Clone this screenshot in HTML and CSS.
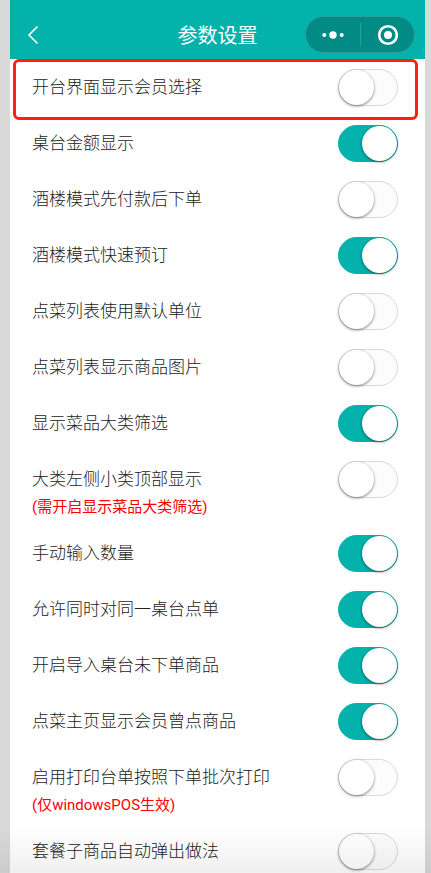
FILE: index.html
```html
<!DOCTYPE html>
<html lang="zh-CN">
<head>
  <meta charset="UTF-8" />
  <meta name="viewport" content="width=device-width, initial-scale=1.0" />
  <title>参数设置</title>
  <link rel="stylesheet" href="styles.css">
</head>
<body>
  <div class="page">
    <header class="navbar">
      <button class="back" type="button" aria-label="返回">
        <svg viewBox="0 0 12 20" width="12" height="20">
          <path d="M10.5 1.5 L2 10 L10.5 18.5" fill="none" stroke="#fff" stroke-width="1.6"/>
        </svg>
      </button>
      <h1>参数设置</h1>
      <div class="capsule">
        <button type="button" aria-label="更多">
          <svg viewBox="0 0 24 20" width="24" height="20" fill="#fff">
            <circle cx="3.3" cy="10" r="2"/>
            <circle cx="12" cy="10" r="3.7"/>
            <circle cx="20.7" cy="10" r="2"/>
          </svg>
        </button>
        <button type="button" aria-label="关闭">
          <svg viewBox="0 0 22 22" width="22" height="22">
            <circle cx="12" cy="11" r="8.8" fill="none" stroke="#fff" stroke-width="2.6"/>
            <circle cx="12" cy="11" r="4" fill="#fff"/>
          </svg>
        </button>
      </div>
    </header>

    <main class="settings">
      <div class="row marked">
        <label for="s1">开台界面显示会员选择</label>
        <input class="switch" type="checkbox" id="s1" />
      </div>
      <div class="row">
        <label for="s2">桌台金额显示</label>
        <input class="switch" type="checkbox" id="s2" checked />
      </div>
      <div class="row">
        <label for="s3">酒楼模式先付款后下单</label>
        <input class="switch" type="checkbox" id="s3" />
      </div>
      <div class="row">
        <label for="s4">酒楼模式快速预订</label>
        <input class="switch" type="checkbox" id="s4" checked />
      </div>
      <div class="row">
        <label for="s5">点菜列表使用默认单位</label>
        <input class="switch" type="checkbox" id="s5" />
      </div>
      <div class="row">
        <label for="s6">点菜列表显示商品图片</label>
        <input class="switch" type="checkbox" id="s6" />
      </div>
      <div class="row">
        <label for="s7">显示菜品大类筛选</label>
        <input class="switch" type="checkbox" id="s7" checked />
      </div>
      <div class="row">
        <label for="s8">大类左侧小类顶部显示 <small>(需开启显示菜品大类筛选)</small></label>
        <input class="switch" type="checkbox" id="s8" />
      </div>
      <div class="row">
        <label for="s9">手动输入数量</label>
        <input class="switch" type="checkbox" id="s9" checked />
      </div>
      <div class="row">
        <label for="s10">允许同时对同一桌台点单</label>
        <input class="switch" type="checkbox" id="s10" checked />
      </div>
      <div class="row">
        <label for="s11">开启导入桌台未下单商品</label>
        <input class="switch" type="checkbox" id="s11" checked />
      </div>
      <div class="row">
        <label for="s12">点菜主页显示会员曾点商品</label>
        <input class="switch" type="checkbox" id="s12" checked />
      </div>
      <div class="row">
        <label for="s13">启用打印台单按照下单批次打印 <small>(仅windowsPOS生效)</small></label>
        <input class="switch" type="checkbox" id="s13" />
      </div>
      <div class="row">
        <label for="s14">套餐子商品自动弹出做法</label>
        <input class="switch" type="checkbox" id="s14" />
      </div>
    </main>
  </div>
</body>
</html>
```

FILE: styles.css
```css
* {
  box-sizing: border-box;
}

body {
  margin: 0;
  height: 100vh;
  overflow: hidden;
  padding: 0 6px 0 10px;
  background: #d9d9d9;
  font-family: Roboto, "Noto Sans CJK SC", sans-serif;
  color: #222;
}

.page {
  min-height: 100vh;
  background: #fff;
}

/* fade along the bottom edge of the screen */
body::after {
  content: "";
  position: fixed;
  left: 0;
  right: 0;
  bottom: 0;
  height: 48px;
  background: linear-gradient(rgba(0, 0, 0, 0), rgba(0, 0, 0, 0.06));
  pointer-events: none;
}

button {
  display: flex;
  align-items: center;
  justify-content: center;
  padding: 0;
  border: 0;
  background: none;
}

.navbar {
  display: grid;
  grid-template-columns: 1fr auto 1fr;
  align-items: center;
  height: 59px;
  padding: 10px 10px 0;
  background: #02b2ab;
}

.back {
  width: 13px;
  height: 36px;
  margin-left: 6px;
}

h1 {
  margin: 0;
  padding-top: 2px;
  font-size: 20px;
  font-weight: 400;
  line-height: 36px;
  color: #fff;
}

.capsule {
  display: flex;
  justify-self: end;
  width: 110px;
  height: 37px;
  padding: 6px 0;
  border: 1px solid #2a9f99;
  border-radius: 19px;
  background: #028a84;
}

.capsule button {
  flex: 1;
}

.capsule button + button {
  border-left: 1px solid #2a9f99;
}

.settings {
  padding-top: 1px;
}

.row {
  position: relative;
  display: flex;
  align-items: flex-start;
  justify-content: space-between;
  padding: 9px 27px 10px 22px;
}

/* red frame drawn over the list */
.marked::after {
  content: "";
  position: absolute;
  z-index: 1;
  top: -1px;
  right: 7px;
  bottom: -4px;
  left: 3px;
  border: 3px solid #ff210a;
  border-radius: 6px;
  pointer-events: none;
}

label {
  font-size: 17px;
  font-weight: 300;
  line-height: 37px;
}

label small {
  display: block;
  font-size: 15px;
  font-weight: 400;
  line-height: 18px;
  color: #f00;
}

.switch {
  appearance: none;
  flex: none;
  display: flex;
  width: 60px;
  height: 37px;
  margin: 0;
  border: 1px solid #d9d9d9;
  border-radius: 19px;
  background: #fcfcfc;
}

.switch::before {
  content: "";
  width: 35px;
  height: 35px;
  border-radius: 50%;
  background: #fff;
  box-shadow: 0 1px 3px rgba(0, 0, 0, 0.5);
}

.switch:checked {
  justify-content: flex-end;
  border-color: #02b2ab;
  background: #02b2ab;
}
```
